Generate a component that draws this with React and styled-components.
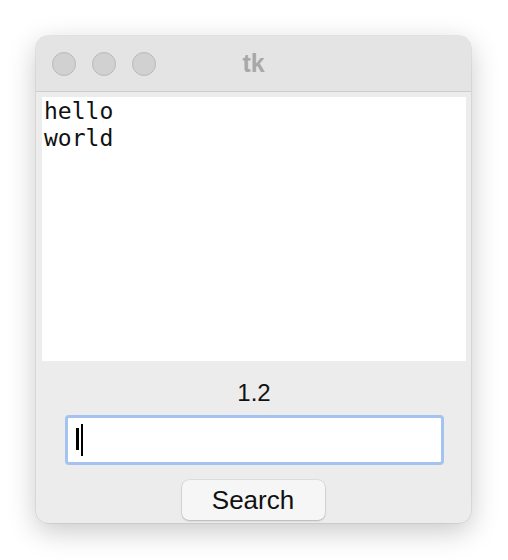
import React from 'react'
import styled, { createGlobalStyle } from 'styled-components'

const Global = createGlobalStyle`
  html, body {
    margin: 0;
    padding: 0;
    background: #ffffff;
  }
`

const Page = styled.div`
  width: 508px;
  height: 560px;
  padding: 36px 0 0 36px;
  box-sizing: border-box;
`

const Window = styled.div`
  width: 435px;
  height: 487px;
  background: #ececec;
  border-radius: 12px;
  box-shadow: 0 0 0 0.5px rgba(0, 0, 0, 0.12), 0 8px 28px rgba(0, 0, 0, 0.22);
  display: flex;
  flex-direction: column;
  overflow: hidden;
  font-family: "Liberation Sans", Arial, sans-serif;
`

const TitleBar = styled.div`
  height: 56px;
  flex: none;
  background: #e4e4e4;
  border-bottom: 1px solid #cdcdcd;
  display: flex;
  align-items: center;
  position: relative;
  padding-left: 16px;
  gap: 16px;
  box-sizing: border-box;
`

const Light = styled.span`
  width: 24px;
  height: 24px;
  border-radius: 50%;
  background: #d1d1d1;
  border: 1px solid #b9b9b9;
  box-sizing: border-box;
`

const Title = styled.div`
  position: absolute;
  left: 0;
  right: 0;
  top: 0;
  bottom: 0;
  display: flex;
  align-items: center;
  justify-content: center;
  font-weight: bold;
  font-size: 25px;
  color: #a8a8a8;
  pointer-events: none;
`

const Body = styled.div`
  flex: 1;
  display: flex;
  flex-direction: column;
  align-items: center;
  padding: 5px 5px 0 6px;
`

const TextArea = styled.div`
  align-self: stretch;
  height: 264px;
  background: #ffffff;
  font-family: "DejaVu Sans Mono", monospace;
  font-size: 23px;
  line-height: 27px;
  color: #111;
  padding: 1px 2px 0 2px;
  box-sizing: border-box;
  white-space: pre;
`

const Label = styled.div`
  margin-top: 19px;
  font-size: 24px;
  line-height: 26px;
  color: #111;
`

const Entry = styled.div`
  margin-top: 9px;
  width: 379px;
  height: 50px;
  box-sizing: border-box;
  background: #fff;
  border: 3px solid #a4c3f0;
  border-radius: 4px;
  display: flex;
  align-items: center;
  padding-left: 8px;
  gap: 2px;
`

const Caret = styled.span`
  width: ${p => p.$w}px;
  height: ${p => p.$h}px;
  background: #000;
  margin-top: ${p => p.$mt || 0}px;
`

const Button = styled.button`
  margin-top: 15px;
  margin-right: 2px;
  width: 143px;
  height: 40px;
  border: none;
  border-radius: 7px;
  background: #f6f6f6;
  box-shadow: 0 0 0 0.5px rgba(0, 0, 0, 0.12), 0 1px 2px rgba(0, 0, 0, 0.18);
  font-family: "Liberation Sans", Arial, sans-serif;
  font-size: 26px;
  color: #111;
  padding: 0;
`

export default function App() {
  return (
    <Page>
      <Global />
      <Window>
        <TitleBar>
          <Light />
          <Light />
          <Light />
          <Title>tk</Title>
        </TitleBar>
        <Body>
          <TextArea>{'hello\nworld'}</TextArea>
          <Label>1.2</Label>
          <Entry>
            <Caret $w={3} $h={22} $mt={-2} />
            <Caret $w={2} $h={32} />
          </Entry>
          <Button>Search</Button>
        </Body>
      </Window>
    </Page>
  )
}
